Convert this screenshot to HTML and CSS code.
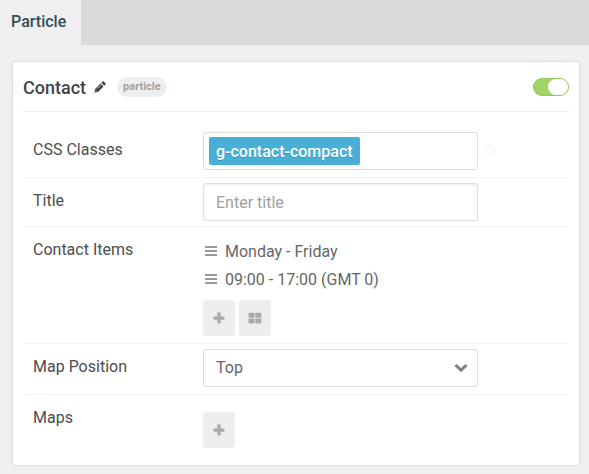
FILE: index.html
```html
<!DOCTYPE html>
<html lang="en">
<head>
<meta charset="utf-8">
<title>Particle</title>
<link rel="stylesheet" href="styles.css">
</head>
<body>
<nav class="tabs"><a class="tab" href="#particle">Particle</a></nav>
<main class="content" id="particle">
  <form class="card">
    <header class="card-header">
      <h1 class="card-title">Contact</h1>
      <button class="edit" type="button" aria-label="Edit title">
        <svg width="12" height="12" viewBox="0 0 12 12"><path fill="#444" d="M.4 11.600 1 8 6.500 2.500 9.500 5.500 4 11ZM7.300 1.700 8.500.5Q9.100 0 9.700.5L11.500 2.300Q12 2.900 11.500 3.500L10.300 4.700Z"/><path stroke="#fff" stroke-width=".7" fill="none" d="M3.200 7.500 6.600 4.100M1.600 9.300 2.700 10.400"/></svg>
      </button>
      <span class="badge">particle</span>
      <input class="toggle" type="checkbox" checked aria-label="Enabled">
    </header>

    <div class="row">
      <label class="label" for="classes">CSS Classes</label>
      <div class="field">
        <div class="box tags">
          <span class="tag">g-contact-compact</span>
          <input class="tag-input" id="classes" type="text">
        </div>
        <button class="reset" type="button" aria-label="Reset">
          <svg width="14" height="14" viewBox="0 0 14 14"><circle cx="7" cy="7" r="6.500" fill="#fafafa"/><path stroke="#fff" stroke-width="2" d="M4.500 4.500 9.500 9.500M9.500 4.500 4.500 9.500"/></svg>
        </button>
      </div>
    </div>

    <div class="row">
      <label class="label" for="title">Title</label>
      <div class="field"><input class="box text" id="title" type="text" placeholder="Enter title"></div>
    </div>

    <div class="row">
      <span class="label">Contact Items</span>
      <div class="field collection">
        <ul class="items">
          <li class="item"><svg width="12" height="12" viewBox="0 0 12 12"><path fill="#999" d="M0 0h12v2H0zM0 4h12v2H0zM0 8h12v2H0z"/></svg>Monday - Friday</li>
          <li class="item"><svg width="12" height="12" viewBox="0 0 12 12"><path fill="#999" d="M0 0h12v2H0zM0 4h12v2H0zM0 8h12v2H0z"/></svg>09:00 - 17:00 (GMT 0)</li>
        </ul>
        <div class="actions">
          <button class="action" type="button" aria-label="Add item"><svg width="12" height="12" viewBox="0 0 12 12"><path fill="#aaa" d="M5 .5h2q.7 0 .7.700v3.300h3q.8 0 .8.800v1.600q0 .8-.8.800h-3v3q0 .8-.7.800H5q-.7 0-.7-.8v-3h-3q-.8 0-.8-.8V5.300q0-.8.8-.8h3V1.200Q4.300.5 5 .5z"/></svg></button>
          <button class="action" type="button" aria-label="Edit all items"><svg width="14" height="12" viewBox="0 0 14 12"><g fill="#aaa"><rect x=".5" y=".8" width="6" height="4.900" rx=".8"/><rect x="7.300" y=".8" width="6" height="4.900" rx=".8"/><rect x=".5" y="6.500" width="6" height="4.900" rx=".8"/><rect x="7.300" y="6.500" width="6" height="4.900" rx=".8"/></g></svg></button>
        </div>
      </div>
    </div>

    <div class="row">
      <label class="label" for="position">Map Position</label>
      <div class="field select-wrap">
        <select class="box select" id="position"><option>Top</option><option>Bottom</option></select>
        <svg class="chevron" width="14" height="10" viewBox="0 0 14 10"><path fill="none" stroke="#808080" stroke-width="3" d="M1.500 2 7 7.200 12.500 2"/></svg>
      </div>
    </div>

    <div class="row">
      <span class="label">Maps</span>
      <div class="field maps">
        <button class="action" type="button" aria-label="Add map"><svg width="12" height="12" viewBox="0 0 12 12"><path fill="#aaa" d="M5 .5h2q.7 0 .7.700v3.300h3q.8 0 .8.800v1.600q0 .8-.8.800h-3v3q0 .8-.7.800H5q-.7 0-.7-.8v-3h-3q-.8 0-.8-.8V5.300q0-.8.8-.8h3V1.200Q4.300.5 5 .5z"/></svg></button>
      </div>
    </div>
  </form>
</main>
</body>
</html>
```

FILE: styles.css
```css
* { box-sizing: border-box; }

body {
  margin: 0;
  background: #efefef;
  color: #4d4d4d;
  font: 16px/28px Roboto, sans-serif;
}

button, input, select { margin: 0; font: inherit; }
button { padding: 0; border: 0; background: none; }
svg { display: block; flex: none; }

.tabs { display: flex; background: #dadada; }

.tab {
  padding: 0 15px 2px 11px;
  background: #efefef;
  color: #314d59;
  font-weight: 500;
  line-height: 43px;
  text-decoration: none;
}

.content { padding: 16px 9px 8px 12px; }

.card {
  padding: 0 10px 10px;
  border: 1px solid #ddd;
  border-radius: 3px;
  background: #fff;
}

.card-header {
  display: flex;
  align-items: center;
  height: 50px;
  margin-bottom: 15px;
  border-bottom: 1px solid #eee;
}

.card-title {
  margin: 0;
  padding-top: 2px;
  color: #444;
  font-size: 18px;
  font-weight: 500;
}

.edit { margin: 0 11px 0 8px; }

.badge {
  padding: 0 6px;
  border-radius: 10px;
  background: #eee;
  color: #a2a2a2;
  font-size: 11px;
  font-weight: 700;
  line-height: 20px;
}

.toggle {
  display: flex;
  justify-content: flex-end;
  width: 36px;
  height: 18px;
  margin-left: auto;
  border: 1px solid #94c95e;
  border-radius: 9px;
  background: #a0d468;
  appearance: none;
}

.toggle::before {
  width: 20px;
  height: 16px;
  border-radius: 8px;
  background: #fff;
  content: "";
}

.row {
  display: flex;
  padding: 5px 10px 7px;
  border-bottom: 1px solid #f3f3f3;
}

.row:nth-child(3) { padding-bottom: 5px; }
.row:last-child { border-bottom: 0; }

.label { flex: none; width: 170px; line-height: 36px; }

.field { display: flex; flex: 1; align-items: center; color: #666; }

.box {
  width: 275px;
  height: 38px;
  border: 1px solid #ddd;
  border-radius: 3px;
  background: #fff;
  color: #666;
}

.tags { display: flex; align-items: center; padding: 0 5px; }

.tag {
  padding: 2px 7px 0;
  border-radius: 2px;
  background: #48b0d7;
  color: #fff;
  font-weight: 500;
  line-height: 26px;
  text-shadow: 0 1px 0 rgba(0, 0, 0, 0.2);
}

.tag-input { flex: 1; min-width: 0; border: 0; outline: 0; }

.reset { margin-left: 5px; }

.text { padding: 0 12px; box-shadow: inset 0 1px 2px rgba(0, 0, 0, 0.08); }
.text::placeholder { color: #a0a0a0; opacity: 1; }

.collection { flex-direction: column; align-items: flex-start; gap: 6px; padding-top: 6px; }

.items { margin: 0; padding: 0 0 0 2px; list-style: none; }
.item { display: flex; align-items: center; gap: 8px; }

.actions { display: flex; gap: 4px; }

.action {
  display: flex;
  align-items: center;
  justify-content: center;
  width: 32px;
  height: 36px;
  border-radius: 3px;
  background: #eee;
}

.select-wrap { display: grid; justify-content: start; }
.select-wrap > * { grid-area: 1 / 1; }
.select { padding: 0 12px; appearance: none; }
.chevron { margin-right: 10px; justify-self: end; pointer-events: none; }

.maps { padding-top: 12px; }
```
